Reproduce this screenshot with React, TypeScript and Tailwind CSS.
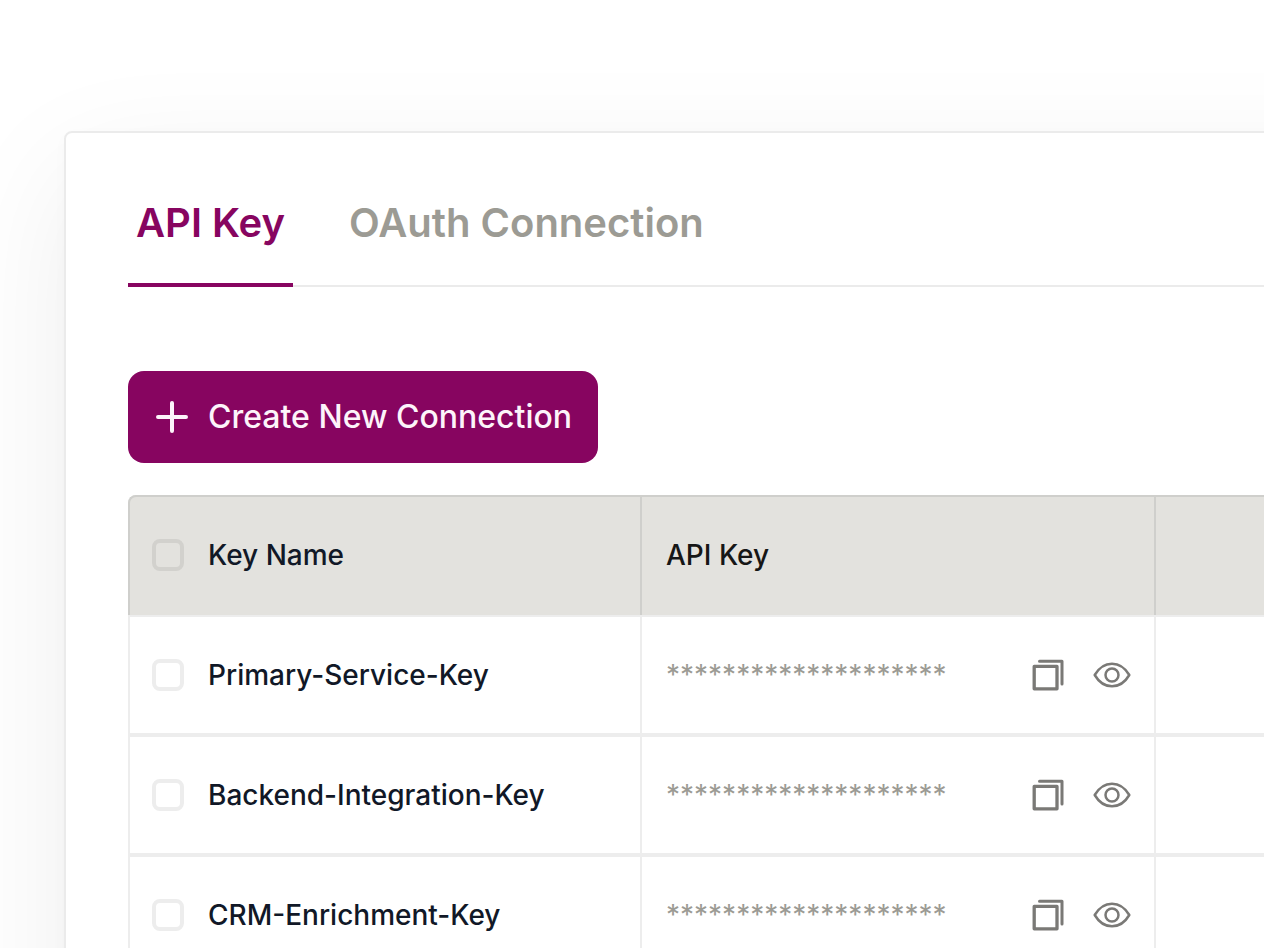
import { useState } from 'react'

type Tab = 'api' | 'oauth'

const TABS: { id: Tab; label: string }[] = [
  { id: 'api', label: 'API Key' },
  { id: 'oauth', label: 'OAuth Connection' },
]

const KEYS = ['Primary-Service-Key', 'Backend-Integration-Key', 'CRM-Enrichment-Key']

const MASK = '*'.repeat(20)

export default function App() {
  const [tab, setTab] = useState<Tab>('api')

  return (
    <div className="h-screen overflow-hidden bg-white pt-[131px] pl-16 font-['Inter',sans-serif]">
      {/* Card bleeds past the right and bottom edges */}
      <main className="-mr-64 min-h-[150vh] rounded-lg border-2 border-[#ebebeb] bg-white pl-[62px] shadow-[0_40px_128px_rgba(0,0,0,0.07),0_4px_16px_rgba(0,0,0,0.02)]">
        <div role="tablist" className="flex gap-12 pt-[62px] shadow-[inset_0_-2px_0_#ebebeb]">
          {TABS.map(t => (
            <TabButton key={t.id} label={t.label} active={tab === t.id} onClick={() => setTab(t.id)} />
          ))}
        </div>

        <button
          type="button"
          className="mt-[84px] flex h-[92px] items-center gap-4 rounded-2xl bg-[#870560] pr-[26px] pl-6 text-[32px] leading-10 font-medium text-[#fdf4fa]"
        >
          <PlusIcon />
          Create New Connection
        </button>

        <table className="mt-8 w-full table-fixed border-separate border-spacing-0 text-left text-[28px] leading-10">
          <colgroup>
            <col className="w-[512px]" />
            <col className="w-[514px]" />
            <col />
          </colgroup>
          <thead>
            <tr className="h-[120px] bg-[#e3e2de] [&>th]:border-t-2 [&>th]:border-l-2 [&>th]:border-[#cfcfcc] [&>th]:pb-0.5 [&>th]:font-medium">
              <th className="rounded-tl-lg pl-[22px]">
                <label className="flex items-center gap-6 text-[#111827]">
                  <Checkbox className="border-[#d2d1cd]" />
                  Key Name
                </label>
              </th>
              <th className="pl-6 text-[#161616]">API Key</th>
              <th aria-label="Details" />
            </tr>
          </thead>
          <tbody>
            {KEYS.map(name => (
              <KeyRow key={name} name={name} />
            ))}
          </tbody>
        </table>
      </main>
    </div>
  )
}

// ── Sub-components ──────────────────────────────────────────────────────────

function TabButton({ label, active, onClick }: { label: string; active: boolean; onClick: () => void }) {
  return (
    <button
      type="button"
      role="tab"
      aria-selected={active}
      onClick={onClick}
      className={`border-b-4 px-2 pt-1 pb-9 text-[40px] leading-12 font-semibold ${
        active ? 'border-[#870560] text-[#870560]' : 'border-transparent text-[#9c9b94]'
      }`}
    >
      {label}
    </button>
  )
}

function KeyRow({ name }: { name: string }) {
  const [shown, setShown] = useState(false)

  return (
    <tr className="h-[120px] [&>td]:border-y-2 [&>td]:border-l-2 [&>td]:border-[#ededed]">
      <td className="pl-[22px]">
        <label className="flex items-center gap-6 font-medium text-[#111827]">
          <Checkbox className="border-[#ededed]" />
          {name}
        </label>
      </td>
      <td className="pr-[22px] pl-6">
        <div className="flex items-center justify-between">
          <span className="text-[#9c9b94]">{MASK}</span>
          <div className="flex gap-6 text-[#7a7976]">
            <button type="button" aria-label={`Copy ${name}`}>
              <CopyIcon />
            </button>
            <button type="button" aria-label={`Reveal ${name}`} aria-pressed={shown} onClick={() => setShown(!shown)}>
              <EyeIcon />
            </button>
          </div>
        </div>
      </td>
      <td />
    </tr>
  )
}

function Checkbox({ className }: { className: string }) {
  return (
    <input
      type="checkbox"
      className={`size-8 shrink-0 appearance-none rounded-lg border-4 checked:bg-[#870560] ${className}`}
    />
  )
}

function PlusIcon() {
  return (
    <svg width="40" height="40" viewBox="0 0 40 40" fill="none" stroke="currentColor" strokeWidth="4" strokeLinecap="round">
      <path d="M20 6v28M6 20h28" />
    </svg>
  )
}

function CopyIcon() {
  return (
    <svg width="40" height="40" viewBox="0 0 40 40" fill="none" stroke="currentColor" strokeWidth="3.3" strokeLinejoin="round">
      <rect x="6.200" y="11.400" width="22.800" height="22.400" />
      <path d="M11.500 6.200h22.500v22.800" strokeWidth="3" strokeLinecap="round" />
    </svg>
  )
}

function EyeIcon() {
  return (
    <svg width="40" height="40" viewBox="0 0 40 40" fill="none" stroke="currentColor" strokeWidth="2.5" strokeLinecap="round" strokeLinejoin="round">
      <path d="M2.700 20C7 12.700 13 8.700 20 8.700S33 12.700 37.300 20C33 27.300 27 31.300 20 31.300S7 27.300 2.700 20Z" />
      <circle cx="20" cy="20" r="6.500" />
    </svg>
  )
}
